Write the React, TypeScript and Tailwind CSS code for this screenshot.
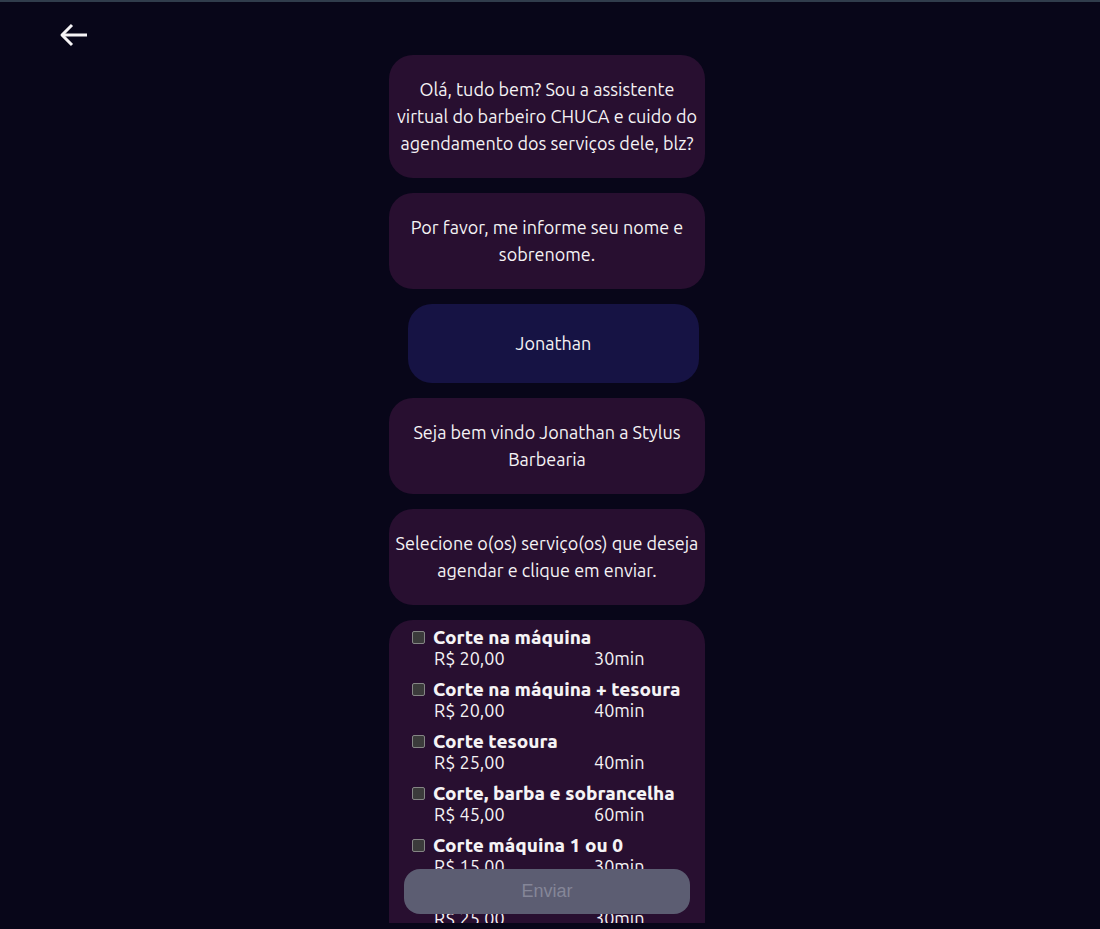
import type { ReactNode } from "react";

type Service = { id: string; name: string; price: string; time: string };

const services: Service[] = [
  { id: "maquina", name: "Corte na máquina", price: "R$ 20,00", time: "30min" },
  { id: "maquina-tesoura", name: "Corte na máquina + tesoura", price: "R$ 20,00", time: "40min" },
  { id: "tesoura", name: "Corte tesoura", price: "R$ 25,00", time: "40min" },
  { id: "completo", name: "Corte, barba e sobrancelha", price: "R$ 45,00", time: "60min" },
  { id: "maquina-1-0", name: "Corte máquina 1 ou 0", price: "R$ 15,00", time: "30min" },
  { id: "infantil", name: "Corte infantil", price: "R$ 25,00", time: "30min" },
];

function BotMessage({ children }: { children: ReactNode }) {
  return (
    <p className="shrink-0 rounded-3xl bg-[#280f30] px-[3px] py-[21px] text-center leading-[27px]">
      {children}
    </p>
  );
}

function UserMessage({ children }: { children: ReactNode }) {
  return (
    <p className="mr-1.5 ml-[19px] shrink-0 rounded-3xl bg-[#161344] py-[26px] text-center leading-[27px]">
      {children}
    </p>
  );
}

function ServiceRow({ service }: { service: Service }) {
  return (
    <li className="flex h-[52px] gap-2">
      <input
        id={service.id}
        type="checkbox"
        className="mt-[5px] size-[13px] shrink-0 appearance-none rounded-xs border border-[#858585] bg-[#3b3b3b] checked:bg-[#8ab4f8]"
      />
      <label htmlFor={service.id} className="block pt-px whitespace-nowrap leading-[21px]">
        <strong className="block text-[19px] leading-[21px] font-extrabold">{service.name}</strong>
        <span className="flex pl-px">
          <span className="w-40">{service.price}</span>
          <span>{service.time}</span>
        </span>
      </label>
    </li>
  );
}

export default function App() {
  return (
    <div className="relative flex h-screen flex-col border-t-2 border-[#303c4c] bg-[#080619] pb-1.5 font-[Ubuntu,'Noto_Sans',sans-serif] text-lg font-[450] text-[#f5f3f5]">
      <header className="flex h-[53px] shrink-0 items-start pt-5 pl-[59px]">
        <a href="#voltar" aria-label="Voltar">
          <svg width="30" height="26" viewBox="0 0 30 26" fill="none" stroke="currentColor" strokeWidth="3">
            <path d="M28 13H3" />
            <path d="M13 3L3 13l10 10" strokeLinejoin="round" />
          </svg>
        </a>
      </header>

      <main className="mx-auto flex min-h-0 w-full max-w-[322px] flex-1 flex-col gap-[15px] overflow-y-auto pr-1.5 [scrollbar-width:none]">
        <BotMessage>
          Olá, tudo bem? Sou a assistente virtual do barbeiro CHUCA e cuido do agendamento dos serviços dele, blz?
        </BotMessage>
        <BotMessage>Por favor, me informe seu nome e sobrenome.</BotMessage>
        <UserMessage>Jonathan</UserMessage>
        <BotMessage>Seja bem vindo Jonathan a Stylus Barbearia</BotMessage>
        <BotMessage>Selecione o(os) serviço(os) que deseja agendar e clique em enviar.</BotMessage>
        <ul className="shrink-0 rounded-3xl bg-[#280f30] pt-1.5 pb-16 pl-[23px]">
          {services.map((service) => (
            <ServiceRow key={service.id} service={service} />
          ))}
        </ul>
      </main>

      <div className="absolute inset-x-0 bottom-[15px] mx-auto w-full max-w-[322px] pr-[21px] pl-[15px]">
        <button
          type="button"
          disabled
          className="block h-[45px] w-full rounded-2xl bg-[#5c5d72] pb-0.5 font-['Liberation_Sans',sans-serif] text-lg font-normal text-[#858698]"
        >
          Enviar
        </button>
      </div>
    </div>
  );
}
